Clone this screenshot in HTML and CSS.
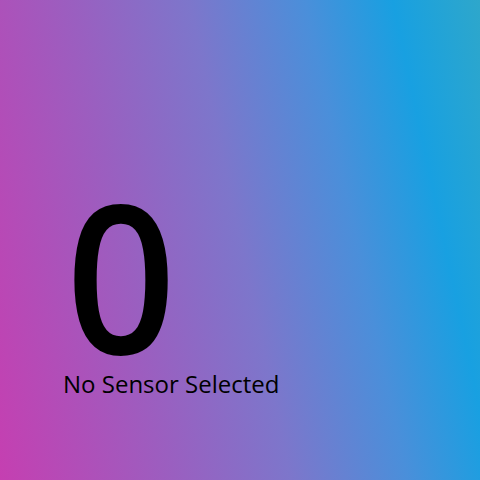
FILE: index.html
```html
<!DOCTYPE html>
<html>
<head>
<meta charset="utf-8">
<link rel="stylesheet" href="styles.css">
</head>
<body>
<main class="panel">
  <div class="reading">
    <div class="value">0</div>
    <div class="label">No Sensor Selected</div>
  </div>
</main>
</body>
</html>
```
FILE: styles.css
```css
html, body {
  margin: 0;
  padding: 0;
}
.panel {
  width: 480px;
  height: 480px;
  box-sizing: border-box;
  display: flex;
  flex-direction: column;
  justify-content: flex-end;
  padding: 0 0 80px 63px;
  background: linear-gradient(78deg, #c53fb1 0%, #9a5fc0 30%, #7d76cb 50%, #4a8fda 70%, #18a0e1 85%, #2ea7cb 100%);
  font-family: "Open Sans", "Noto Sans", sans-serif;
  color: #000;
}
.reading {
  display: flex;
  flex-direction: column;
  align-items: flex-start;
}
.value {
  font-size: 206px;
  line-height: 186px;
  font-weight: 600;
  margin-left: 3px;
  transform: scaleX(0.935);
  transform-origin: left center;
}
.label {
  font-size: 24px;
  line-height: 33px;
}
```
